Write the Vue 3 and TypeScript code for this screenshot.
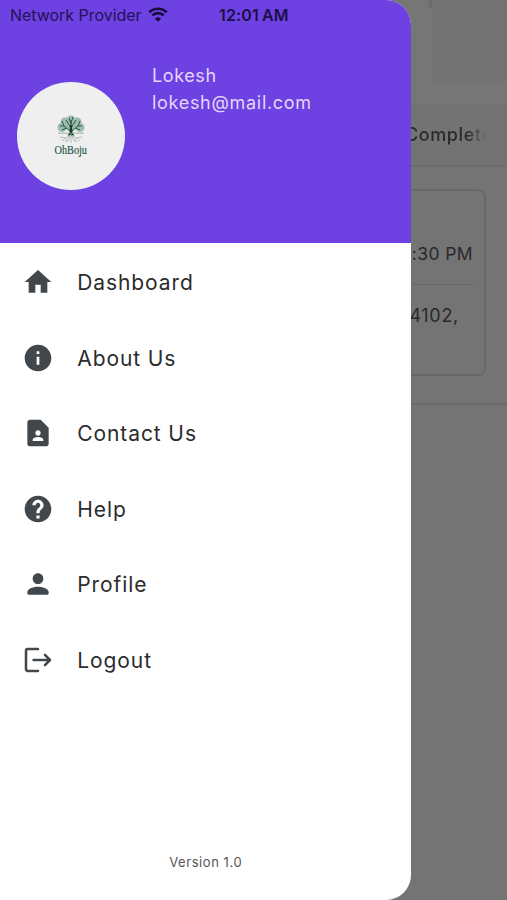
<script setup lang="ts">
interface MenuItem {
  label: string
  path: string
  outline?: boolean
}

const menu: MenuItem[] = [
  { label: 'Dashboard', path: 'M10 20v-6h4v6h5v-8h3L12 3 2 12h3v8z' },
  {
    label: 'About Us',
    path: 'M12 2C6.48 2 2 6.48 2 12s4.48 10 10 10 10-4.48 10-10S17.52 2 12 2zm1 15h-2v-6h2v6zm0-8h-2V7h2v2z',
  },
  {
    label: 'Contact Us',
    path: 'M14 2H6c-1.1 0-2 .9-2 2v16c0 1.1.9 2 2 2h12c1.1 0 2-.9 2-2V8l-6-6zm-2 8c1.1 0 2 .9 2 2s-.9 2-2 2-2-.9-2-2 .9-2 2-2zm4 8H8v-.57c0-.81.48-1.53 1.22-1.85.85-.37 1.79-.58 2.78-.58.99 0 1.93.21 2.78.58.74.32 1.22 1.04 1.22 1.85V18z',
  },
  {
    label: 'Help',
    path: 'M12 2C6.48 2 2 6.48 2 12s4.48 10 10 10 10-4.48 10-10S17.52 2 12 2zm1.2 17.100h-2.400v-2.300h2.400v2.300zm2.070-7.650-.9.920C13.650 13.100 13.200 13.700 13.200 15.200h-2.400v-.7c0-1.1.45-2.1 1.17-2.83l1.24-1.26c.3-.36.49-.86.49-1.310 0-1-.7-1.700-1.700-1.700s-1.700.8-1.700 1.800H7.800c0-2.310 1.890-4.200 4.200-4.200s4.200 1.890 4.200 4.200c0 .88-.36 1.68-.93 2.25z',
  },
  {
    label: 'Profile',
    path: 'M12 12c2.21 0 4-1.79 4-4s-1.79-4-4-4-4 1.79-4 4 1.79 4 4 4zm0 2c-2.67 0-8 1.34-8 4v1c0 .55.45 1 1 1h14c.55 0 1-.45 1-1v-1c0-2.66-5.33-4-8-4z',
  },
  {
    label: 'Logout',
    path: 'M12 3.800H4.400Q3 3.800 3 5.200v13.600q0 1.400 1.400 1.400H12M8.700 12h12M17.200 8.200L21 12l-3.800 3.800',
    outline: true,
  },
]
</script>

<template>
  <div class="screen">
    <main class="page">
      <div class="banner"><div class="banner-edge"></div><div class="banner-card"></div></div>
      <div class="tabs"><span class="tab">Complete</span></div>
      <section class="list">
        <article class="booking">
          <div class="time">:30 PM</div>
          <div class="address">4102,</div>
        </article>
      </section>
    </main>

    <aside class="drawer">
      <header class="header">
        <div class="status">
          <span class="carrier">Network Provider</span>
          <svg class="wifi" viewBox="0 0 20 15">
            <path d="M1.300 5.200a12.500 12.500 0 0 1 17.400 0" />
            <path d="M4.300 8.400a8.200 8.200 0 0 1 11.400 0" />
            <path class="dot" d="M10 14.800l-3-3.100a4.300 4.300 0 0 1 6 0z" />
          </svg>
          <span class="clock">12:01<i class="gap"></i>AM</span>
        </div>
        <div class="user">
          <div class="avatar">
            <svg class="logo" viewBox="0 0 36 46">
              <g class="leaves">
                <circle cx="18" cy="6" r="4.500" />
                <circle cx="12" cy="8" r="4.500" />
                <circle cx="24" cy="8" r="4.500" />
                <circle cx="9" cy="13.500" r="4.500" />
                <circle cx="27" cy="13.500" r="4.500" />
                <circle cx="18" cy="12" r="5" />
              </g>
              <path
                class="branches"
                d="M18 20V6M18 18L11 12L7 12M18 18L25 12L29 12M18 14L13 6M18 14L23 6M14 14L9 16M22 14L27 16M11 12L9 7M25 12L27 7M18 9L20 3M18 10L16 4"
              />
              <path class="trunk" d="M17 11h2l.5 8 2 2.500h-7l2-2.500z" />
              <path class="ground" d="M5 19.200h26" />
              <path
                class="roots"
                d="M18 20v9M18 21l-5 3-6-1M18 21l5 3 6-1M17 22l-3 6M19 22l3 6M13 24l-4 3M23 24l4 3M15 25l-3 3M21 25l3 3"
              />
              <text class="brand" x="1.500" y="39.500" textLength="32.500" lengthAdjust="spacingAndGlyphs">OhBoju</text>
            </svg>
          </div>
          <div class="details">
            <div class="name">Lokesh</div>
            <div class="email">lokesh@mail.com</div>
          </div>
        </div>
      </header>
      <nav class="menu">
        <a v-for="item in menu" :key="item.label" class="item">
          <svg class="icon" :class="{ outline: item.outline }" viewBox="0 0 24 24"><path :d="item.path" /></svg>
          <span class="label">{{ item.label }}</span>
        </a>
      </nav>
      <footer class="version">Version 1.0</footer>
    </aside>
  </div>
</template>

<style>
body {
  margin: 0;
  background: #747474;
}
</style>

<style scoped>
.screen {
  position: relative;
  width: 507px;
  height: 900px;
  overflow: hidden;
  background: #747474;
  font-family: Inter, 'Liberation Sans', sans-serif;
}
.page {
  color: #292929;
}
.banner {
  display: flex;
  justify-content: flex-end;
  height: 104px;
  background: #767676;
}
.banner-edge {
  width: 5px;
  height: 8px;
  background: linear-gradient(90deg, #767676, #69686c);
}
.banner-card {
  width: 75px;
  height: 83px;
  background: #727272;
}
.tabs {
  box-sizing: border-box;
  height: 63px;
  padding: 19px 0 0 405px;
  border-bottom: 2px solid #6c6c6c;
  background: #737373;
}
.tab {
  display: block;
  width: 90px;
  font-size: 18px;
  font-weight: 500;
  line-height: 24px;
  letter-spacing: 0.6px;
  background: linear-gradient(90deg, #292929 62px, rgba(41, 41, 41, 0) 82px);
  background-clip: text;
  color: transparent;
}
.list {
  box-sizing: border-box;
  height: 238px;
  padding: 22px 21px 0 20px;
  border-bottom: 2px solid #6a6a6a;
}
.booking {
  box-sizing: border-box;
  height: 187px;
  padding: 48px 10px 0 0;
  border: 2px solid #686868;
  border-radius: 8px;
}
.time {
  box-sizing: border-box;
  height: 46px;
  padding: 3px 1px 0 0;
  border-bottom: 1px solid #696969;
  font-size: 17.500px;
  line-height: 24px;
  letter-spacing: 0.4px;
  text-align: right;
}
.address {
  padding: 19px 15px 0 0;
  font-size: 18px;
  line-height: 24px;
  letter-spacing: 0.7px;
  text-align: right;
}
.drawer {
  position: absolute;
  top: 0;
  left: 0;
  display: flex;
  flex-direction: column;
  width: 411.400px;
  height: 900px;
  overflow: hidden;
  border-radius: 0 25px 25px 0;
  background: #fff;
}
.header {
  flex: none;
  height: 243.400px;
  background: #6e41e2;
}
.status {
  display: flex;
  align-items: center;
  height: 29px;
  padding-left: 10px;
  color: #241253;
}
.carrier {
  width: 138px;
  font-size: 16px;
  letter-spacing: -0.03px;
  white-space: nowrap;
}
.wifi {
  width: 20px;
  height: 15px;
  margin-bottom: 1px;
  fill: none;
  stroke: #170b3d;
  stroke-width: 2.600;
}
.wifi .dot {
  fill: #170b3d;
  stroke: none;
}
.clock {
  margin-left: 51px;
  font-size: 16px;
  font-weight: 600;
  letter-spacing: 0.15px;
  white-space: nowrap;
  color: #1d0e49;
}
.gap {
  display: inline-block;
  width: 3px;
}
.user {
  display: flex;
  gap: 27px;
  padding: 33px 0 0 17px;
}
.avatar {
  display: flex;
  justify-content: center;
  width: 108px;
  height: 108px;
  margin-top: 19.500px;
  border-radius: 50%;
  background: #efefef;
}
.logo {
  width: 36px;
  height: 46px;
  margin-top: 32.500px;
}
.leaves {
  fill: #76a08a;
  opacity: 0.65;
}
.branches {
  fill: none;
  stroke: #245b44;
  stroke-width: 1;
}
.trunk {
  fill: #173f30;
}
.ground {
  stroke: #7fa592;
  stroke-width: 0.8;
}
.roots {
  fill: none;
  stroke: #a5b0a9;
  stroke-width: 0.8;
}
.brand {
  fill: #285a49;
  stroke: #285a49;
  stroke-width: 0.2;
  font-family: 'Liberation Serif', serif;
  font-size: 12px;
}
.details {
  font-size: 18px;
  line-height: 27px;
  letter-spacing: 0.7px;
  color: #e4d6fb;
}
.name {
  letter-spacing: 0.6px;
}
.email {
  white-space: nowrap;
}
.menu {
  flex: 1;
  padding-top: 1px;
}
.item {
  display: flex;
  align-items: center;
  gap: 23px;
  height: 75.500px;
  padding-left: 22.300px;
  font-size: 21px;
  letter-spacing: 0.9px;
  color: #2b2c2d;
}
.label {
  padding-top: 1px;
}
.icon {
  width: 32px;
  height: 32px;
  fill: #42474b;
}
.icon.outline {
  fill: none;
  stroke: #42474b;
  stroke-width: 1.900;
  stroke-linecap: round;
  stroke-linejoin: round;
}
.version {
  height: 46px;
  font-size: 13px;
  line-height: 17px;
  letter-spacing: 0.55px;
  text-align: center;
  color: #555;
}
</style>
